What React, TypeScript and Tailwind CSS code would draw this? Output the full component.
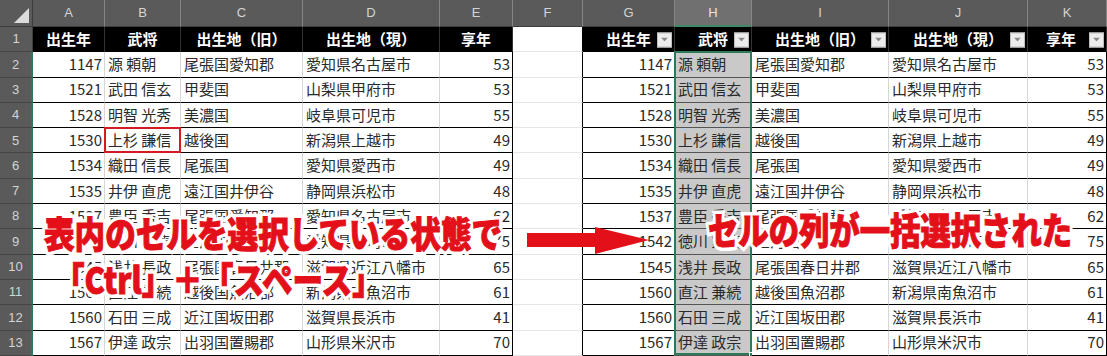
import React from "react";

const FONT = { fontFamily: '"Noto Sans CJK JP", "Noto Sans", sans-serif' };

const letters = ["A", "B", "C", "D", "E", "F", "G", "H", "I", "J", "K"];
const headers = ["出生年", "武将", "出生地（旧）", "出生地（現）", "享年"];
const data: string[][] = [
  ["1147", "源 頼朝", "尾張国愛知郡", "愛知県名古屋市", "53"],
  ["1521", "武田 信玄", "甲斐国", "山梨県甲府市", "53"],
  ["1528", "明智 光秀", "美濃国", "岐阜県可児市", "55"],
  ["1530", "上杉 謙信", "越後国", "新潟県上越市", "49"],
  ["1534", "織田 信長", "尾張国", "愛知県愛西市", "49"],
  ["1535", "井伊 直虎", "遠江国井伊谷", "静岡県浜松市", "48"],
  ["1537", "豊臣 秀吉", "尾張国愛知郡", "愛知県名古屋市", "62"],
  ["1542", "徳川 家康", "三河国", "愛知県岡崎市", "75"],
  ["1545", "浅井 長政", "尾張国春日井郡", "滋賀県近江八幡市", "65"],
  ["1560", "直江 兼続", "越後国魚沼郡", "新潟県南魚沼市", "61"],
  ["1560", "石田 三成", "近江国坂田郡", "滋賀県長浜市", "41"],
  ["1567", "伊達 政宗", "出羽国置賜郡", "山形県米沢市", "70"],
];

function FilterBtn() {
  return (
    <span className="absolute right-[2px] top-1/2 -translate-y-1/2 w-[15px] h-[15px] bg-[#ececec] border border-[#bdbdbd] flex items-center justify-center">
      <svg width="7" height="4" viewBox="0 0 7 4">
        <polygon points="0,0 7,0 3.5,4" fill="#8a8a8a" />
      </svg>
    </span>
  );
}

function Outlined({ text, className }: { text: string; className: string }) {
  return (
    <div className={`absolute whitespace-nowrap font-black origin-left leading-none ${className}`} style={FONT}>
      <span className="absolute left-0 top-0 text-white [-webkit-text-stroke:8px_white]">{text}</span>
      <span className="relative text-[#e3101a] [-webkit-text-stroke:1px_#e3101a]">{text}</span>
    </div>
  );
}

export default function App() {
  const colHeader = (
    <>
      <div className="relative bg-[#5a5a5a] border-r border-b border-[#3d3d3d]">
        <svg className="absolute right-[3px] bottom-[3px]" width="15" height="15" viewBox="0 0 15 15">
          <polygon points="15,0 15,15 0,15" fill="#dcdcdc" />
        </svg>
      </div>
      {letters.map((l) =>
        l === "H" ? (
          <div key={l} className="bg-[#707070] text-[#e6e6e6] text-[13px] flex items-center justify-center border-r border-[#858585] border-b-2 border-b-[#3c8a66]" style={{ fontFamily: '"Liberation Sans", sans-serif' }}>
            {l}
          </div>
        ) : (
          <div key={l} className="bg-[#5a5a5a] text-[#d4d4d4] text-[13px] flex items-center justify-center border-r border-[#858585] border-b border-b-[#3d3d3d]" style={{ fontFamily: '"Liberation Sans", sans-serif' }}>
            {l}
          </div>
        )
      )}
    </>
  );

  const rowHead = (n: number) => (
    <div
      key={`rh${n}`}
      className={
        n === 1
          ? "bg-[#5a5a5a] text-[#d4d4d4] text-[13px] flex items-center justify-center border-b border-[#444] border-r border-r-[#3d3d3d]"
          : "bg-[#5a5a5a] text-[#d4d4d4] text-[13px] flex items-center justify-center border-b border-[#444] border-r-2 border-r-[#2d7a5a]"
      }
      style={{ fontFamily: '"Liberation Sans", sans-serif' }}
    >
      {n}
    </div>
  );

  const headerRow = (
    <>
      {rowHead(1)}
      {headers.map((h, i) => (
        <div key={`lh${i}`} className="bg-black text-white font-bold text-[15px] flex items-center justify-center border-r border-[#333]">
          {h}
        </div>
      ))}
      <div className="bg-white border-b border-[#e3e3e3] border-r border-r-black" />
      {headers.map((h, i) => (
        <div key={`rh${i}`} className="relative bg-black text-white font-bold text-[15px] flex items-center justify-center border-r border-[#333]">
          <span className={i === 4 ? "pr-[12px]" : ""}>{h}</span>
          <FilterBtn />
        </div>
      ))}
    </>
  );

  const dataRows = data.map((row, ri) => {
    const n = ri + 2;
    const last = ri === data.length - 1;
    return (
      <React.Fragment key={`r${n}`}>
        {rowHead(n)}
        {row.map((v, ci) => (
          <div
            key={`l${ci}`}
            className={
              (ci === 0 || ci === 4 ? "justify-end pr-[2px] " : "justify-start pl-[3px] ") +
              (ci === 4 ? "border-r-black " : "border-r-[#d6d6d6] ") +
              "relative bg-white text-[#2a2a2a] text-[15px] flex items-center border-b border-b-black border-r whitespace-nowrap overflow-visible"
            }
          >
            {v}
            {n === 5 && ci === 1 ? <span className="absolute -left-px -top-px -right-px -bottom-px border-2 border-[#d61a22]" /> : null}
          </div>
        ))}
        <div className="bg-white border-b border-[#e6e6e6] border-r border-r-black" />
        {row.map((v, ci) => (
          <div
            key={`r${ci}`}
            className={
              (ci === 0 || ci === 4 ? "justify-end pr-[2px] " : "justify-start pl-[3px] ") +
              (ci === 4 ? "border-r-black " : "border-r-[#d6d6d6] ") +
              (ci === 1 ? "bg-[#c9c9c9] border-b-[#555] " : "bg-white border-b-black ") +
              "relative text-[#2a2a2a] text-[15px] flex items-center border-b border-r whitespace-nowrap"
            }
          >
            {v}
            {ci === 1 ? (
              <span
                className={
                  n === 2
                    ? "absolute -left-px -right-px -top-px -bottom-px border-x-2 border-t-2 border-[#2d7a5a]"
                    : last
                    ? "absolute -left-px -right-px top-0 bottom-0 border-x-2 border-b-2 border-[#2d7a5a]"
                    : "absolute -left-px -right-px top-0 -bottom-px border-x-2 border-[#2d7a5a]"
                }
              />
            ) : null}
            {ci === 1 && last ? <span className="absolute -right-[4px] -bottom-[3px] w-[6px] h-[6px] bg-[#2d7a5a] border border-white" /> : null}
          </div>
        ))}
      </React.Fragment>
    );
  });

  return (
    <div className="relative w-[1107px] h-[356px] overflow-hidden bg-white" style={FONT}>
      <div className="grid grid-cols-[33px_72px_76px_122px_137px_73px_70px_92px_77px_137px_139px_79px] grid-rows-[27px_repeat(13,25.3px)]">
        {colHeader}
        {headerRow}
        {dataRows}
      </div>

      <svg className="absolute left-[527px] top-[224px]" width="126" height="34" viewBox="0 0 126 34">
        <rect x="0" y="9" width="72" height="14" fill="#e3101a" />
        <polygon points="68,3 122,16 68,30" fill="#e3101a" />
      </svg>

      <Outlined text="表内のセルを選択している状態で" className="left-[44px] top-[214px] text-[36px] scale-x-[0.85]" />
      <Outlined text="「Ctrl」＋「スペース」" className="left-[54px] top-[260px] text-[36px] scale-x-[0.85]" />
      <Outlined text="セルの列が一括選択された" className="left-[708px] top-[211px] text-[37px] scale-x-[0.82]" />
    </div>
  );
}
